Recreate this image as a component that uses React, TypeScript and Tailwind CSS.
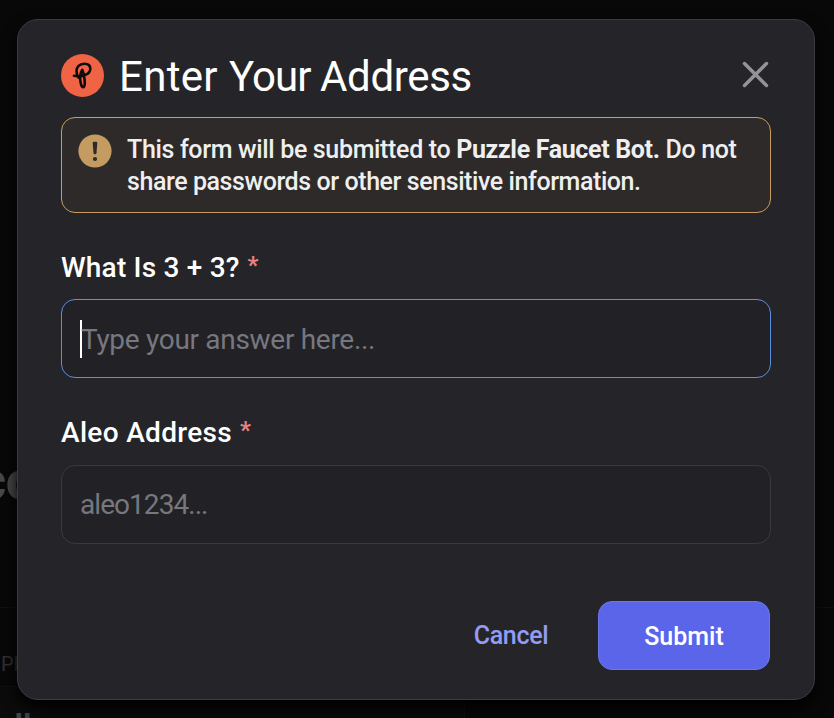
import React from 'react';

function PuzzleLogo() {
  return (
    <svg className="mt-[2px] size-[43px] shrink-0" viewBox="0 0 43 43" fill="none">
      <circle cx="21.5" cy="21.5" r="21.5" fill="#f06445" />
      <path
        d="M13 21.8C18 22.8 29.3 22 29.3 14.8C29.3 11 26.5 9.7 23.5 9.7C18.5 9.7 15.2 13 15.5 17.5C15.7 19.8 16.2 21.5 17.2 23.5M21.3 15.8C19.3 19 18.8 25 19.7 29C20.2 32 21.8 34.8 23.2 32.3C24.5 30 23.3 20 21.3 15.8Z"
        stroke="#0c0c0c"
        strokeWidth="2.6"
        strokeLinecap="round"
        strokeLinejoin="round"
      />
    </svg>
  );
}

function FieldLabel({ children, className }: { children: React.ReactNode; className: string }) {
  return (
    <div className="flex h-9 items-start pt-px whitespace-pre text-[28px] leading-9 font-medium text-white">
      <span className={className}>{children}</span>
      <span className="-mt-[3px] ml-2 text-[24px] font-bold text-[#e78284]">*</span>
    </div>
  );
}

export default function App() {
  return (
    <div className="relative h-[718px] w-[834px] overflow-hidden bg-[#080808] font-[Roboto,sans-serif]">
      <div className="absolute inset-x-0 top-[607px] h-px bg-[#101011]" />
      <div className="absolute top-[686px] left-0 h-8 w-[465px] border-t border-r border-[#111113] bg-[#0b0b0c]" />
      <div className="absolute top-[451px] -left-[22px] text-[54px] leading-[60px] font-black text-[#48484a]">co</div>
      <div className="absolute top-[653px] left-[1px] text-[20px] leading-[22px] text-[#303032]">PM</div>
      <div className="absolute top-[708px] left-[15px] text-[27px] leading-[34px] font-black tracking-[1px] text-[#454547]">ll</div>

      <section className="relative mt-[19px] ml-[17px] flex h-[681px] w-[798px] flex-col rounded-[21px] border border-[#3b3b40] bg-[#252529] px-[43px] pt-8 shadow-[0_8px_16px_#000]">
        <header className="flex h-[65px] items-start">
          <PuzzleLogo />
          <h1 className="ml-[15px] text-[42px] leading-[50px] font-normal whitespace-nowrap text-white">
            <span className="inline-block w-[110px] tracking-[0.3px]">Enter</span>
            <span className="inline-block w-[91px] tracking-[-0.9px]">Your</span>
            <span className="tracking-[-0.33px]">Address</span>
          </h1>
          <svg className="mt-[9px] mr-[2px] ml-auto size-[27px] shrink-0" viewBox="0 0 27 27">
            <path d="M2.5 2.5L24.5 24.5M24.5 2.5L2.5 24.5" stroke="#949497" strokeWidth="3.4" strokeLinecap="round" />
          </svg>
        </header>

        <div className="flex h-24 shrink-0 rounded-[14px] border border-[#c99d60] bg-[#2e2a29] pt-4 pl-4">
          <svg className="size-[34px] shrink-0" viewBox="0 0 34 34">
            <circle cx="17" cy="17" r="16.6" fill="#c49c62" />
            <path d="M14.7 9.1Q14.7 7.8 15.9 7.8H18.1Q19.3 7.8 19.3 9.1L18.5 18.9Q18.4 20.3 17 20.3T15.5 18.9Z" fill="#2e2a29" />
            <circle cx="17" cy="25" r="2.1" fill="#2e2a29" />
          </svg>
          <p className="ml-[15px] text-[25px] leading-8 font-medium whitespace-nowrap text-[#efeff0]">
            <span className="block tracking-[-0.34px]">
              This form will be submitted to <strong className="font-bold">Puzzle Faucet Bot.</strong> Do not
            </span>
            <span className="block tracking-[-0.42px]">share passwords or other sensitive information.</span>
          </p>
        </div>

        <div className="mt-9">
          <FieldLabel className="tracking-[0.2px]">What Is 3 + 3?</FieldLabel>
          <div className="mt-[14px] flex h-[79px] items-center rounded-[14px] border border-[#5b8fdf] bg-[#222226] pl-[18px]">
            <span className="h-[38px] w-[2px] bg-white" />
            <span className="-ml-px pt-[2px] text-[28px] leading-9 tracking-[-0.3px] text-[#77777f]">Type your answer here...</span>
          </div>
        </div>

        <div className="mt-9">
          <FieldLabel className="tracking-[0.33px]">Aleo Address</FieldLabel>
          <div className="mt-[15px] flex h-[79px] items-center rounded-[14px] border border-[#39393e] bg-[#222226] pl-[18px]">
            <span className="text-[28px] leading-9 tracking-[-0.95px] text-[#77777f]">aleo1234...</span>
          </div>
        </div>

        <footer className="mt-[57px] flex h-[69px] items-center justify-end text-[25px] font-medium">
          <button className="mr-[49px] w-[76px] pt-px text-center leading-8 tracking-[-0.3px] text-[#929cf4]">Cancel</button>
          <button className="mr-[1px] h-[69px] w-[172px] rounded-[14px] border border-[#6d76ec] bg-[#5b65ea] pt-[2px] text-white">Submit</button>
        </footer>
      </section>
    </div>
  );
}
